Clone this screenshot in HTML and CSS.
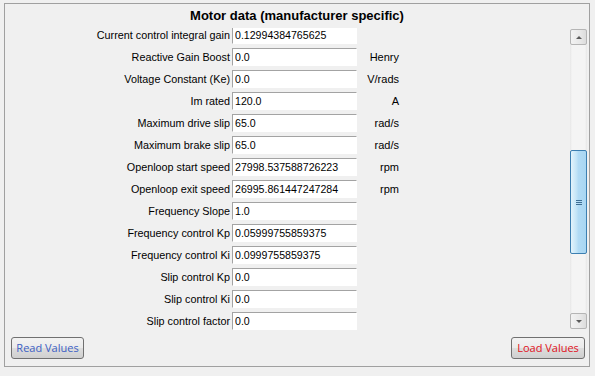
FILE: index.html
```html
<!DOCTYPE html>
<html lang="en">
<head>
  <meta charset="utf-8">
  <title>Motor data</title>
  <link rel="stylesheet" href="styles.css">
</head>
<body>
  <div class="panel">
    <div class="title">Motor data (manufacturer specific)</div>

    <div class="pane">
      <div class="viewport">
        <div class="fields">
          <label class="label">Current control integral gain</label>
          <input class="field" type="text" value="0.12994384765625">
          <span class="unit"></span>

          <label class="label">Reactive Gain Boost</label>
          <input class="field" type="text" value="0.0">
          <span class="unit">Henry</span>

          <label class="label">Voltage Constant (Ke)</label>
          <input class="field" type="text" value="0.0">
          <span class="unit">V/rads</span>

          <label class="label">Im rated</label>
          <input class="field" type="text" value="120.0">
          <span class="unit">A</span>

          <label class="label">Maximum drive slip</label>
          <input class="field" type="text" value="65.0">
          <span class="unit">rad/s</span>

          <label class="label">Maximum brake slip</label>
          <input class="field" type="text" value="65.0">
          <span class="unit">rad/s</span>

          <label class="label">Openloop start speed</label>
          <input class="field" type="text" value="27998.537588726223">
          <span class="unit">rpm</span>

          <label class="label">Openloop exit speed</label>
          <input class="field" type="text" value="26995.861447247284">
          <span class="unit">rpm</span>

          <label class="label">Frequency Slope</label>
          <input class="field" type="text" value="1.0">
          <span class="unit"></span>

          <label class="label">Frequency control Kp</label>
          <input class="field" type="text" value="0.05999755859375">
          <span class="unit"></span>

          <label class="label">Frequency control Ki</label>
          <input class="field" type="text" value="0.0999755859375">
          <span class="unit"></span>

          <label class="label">Slip control Kp</label>
          <input class="field" type="text" value="0.0">
          <span class="unit"></span>

          <label class="label">Slip control Ki</label>
          <input class="field" type="text" value="0.0">
          <span class="unit"></span>

          <label class="label">Slip control factor</label>
          <input class="field" type="text" value="0.0">
          <span class="unit"></span>
        </div>
      </div>

      <div class="scrollbar">
        <div class="sb-btn"><span class="arrow-up"></span></div>
        <div class="sb-before"></div>
        <div class="sb-thumb">
          <span class="grip"></span>
          <span class="grip"></span>
          <span class="grip"></span>
        </div>
        <div class="sb-after"></div>
        <div class="sb-btn"><span class="arrow-down"></span></div>
      </div>
    </div>

    <div class="actions">
      <button class="btn btn-read">Read Values</button>
      <button class="btn btn-load">Load Values</button>
    </div>
  </div>
</body>
</html>
```

FILE: styles.css
```css
body {
  margin: 0;
  background: #f0f0f0;
  font-family: "Liberation Sans", Arial, sans-serif;
  font-size: 11px;
  color: #000;
}

.panel {
  margin: 3px 0 0 4px;
  width: 586px;
  height: 364px;
  box-sizing: border-box;
  border: 1px solid #a0a0a0;
  padding: 0 2px 0 0;
  display: flex;
  flex-direction: column;
}

.title {
  font-weight: bold;
  font-size: 13px;
  line-height: 16px;
  text-align: center;
  padding: 4px 0 4px 2px;
}

.pane {
  display: flex;
  height: 302px;
}

.viewport {
  flex: 1;
  overflow: hidden;
}

/* content is scrolled a little, first row is cut at the top */
.fields {
  display: grid;
  grid-template-columns: 225px 125px 40px;
  grid-auto-rows: 18px;
  column-gap: 2px;
  row-gap: 4px;
  align-items: center;
  margin-top: -2px;
}

.label {
  font-size: 10.8px;
  text-align: right;
  white-space: nowrap;
}

.field {
  height: 18px;
  width: 125px;
  box-sizing: border-box;
  margin: 0;
  padding: 0 2px;
  border: 1px solid;
  border-color: #a3a3a3 #ffffff #ffffff #a3a3a3;
  background: #fff;
  font-family: "Liberation Sans", Arial, sans-serif;
  font-size: 10.6px;
  color: #000;
  outline: none;
}

.unit {
  text-align: right;
  white-space: nowrap;
}

/* fake windows scrollbar */
.scrollbar {
  width: 17px;
  height: 300px;
  margin-top: 1px;
  box-sizing: border-box;
  display: flex;
  flex-direction: column;
  background: linear-gradient(90deg, #e6e6e6 0, #f4f4f4 2px, #f4f4f4 15px, #e6e6e6 17px);
}

.sb-btn {
  height: 16px;
  box-sizing: border-box;
  border: 1px solid #b5b5b5;
  border-radius: 2px;
  background: linear-gradient(90deg, #f3f3f3, #e8e8e8 60%, #dcdcdc);
  display: flex;
  align-items: center;
  justify-content: center;
}

.arrow-up,
.arrow-down {
  width: 0;
  height: 0;
  border-left: 3px solid transparent;
  border-right: 3px solid transparent;
}

.arrow-up {
  border-bottom: 3px solid #5a5a5a;
}

.arrow-down {
  border-top: 3px solid #5a5a5a;
}

.sb-before {
  height: 105px;
}

.sb-thumb {
  height: 104px;
  box-sizing: border-box;
  border: 1px solid #3c7fb1;
  border-radius: 2px;
  background: linear-gradient(90deg, #e3f4fc 0, #c4e5f7 35%, #b1dbf5 50%, #a9d6f2 100%);
  display: flex;
  flex-direction: column;
  align-items: center;
  justify-content: center;
  gap: 1px;
}

.grip {
  width: 6px;
  height: 1px;
  background: #3f6f94;
}

.sb-after {
  flex: 1;
}

.actions {
  display: flex;
  justify-content: space-between;
  padding: 7px 2px 0 6px;
}

.btn {
  height: 22px;
  margin: 0;
  padding: 0;
  border: 1px solid #707070;
  border-radius: 3px;
  background: linear-gradient(#f2f2f2 0%, #ebebeb 48%, #dddddd 52%, #cfcfcf 100%);
  font-family: "Open Sans", sans-serif;
  font-size: 11px;
  line-height: 20px;
}

.btn-read {
  width: 73px;
  color: #3c5fc4;
}

.btn-load {
  width: 74px;
  color: #e0101a;
}
```
